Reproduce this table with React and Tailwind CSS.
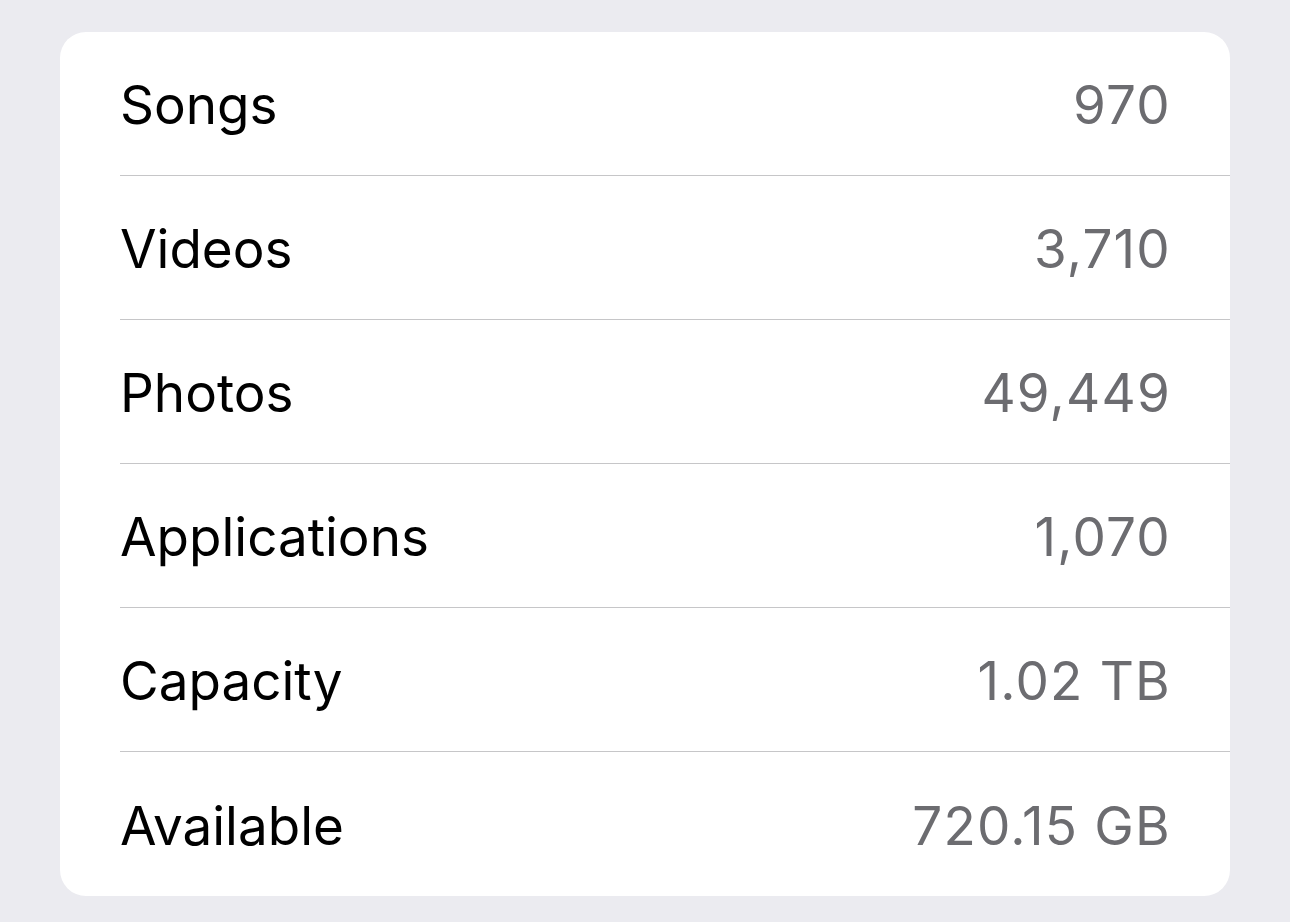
const rows = [
  { label: "Songs", value: "970" },
  { label: "Videos", value: "3,710" },
  { label: "Photos", value: "49,449" },
  { label: "Applications", value: "1,070" },
  { label: "Capacity", value: "1.02 TB" },
  { label: "Available", value: "720.15 GB" },
];

export default function App() {
  return (
    <div className="min-h-screen bg-[#ebebf0] px-[60px] pt-[32px] pb-[26px] font-['Inter','Liberation_Sans',sans-serif]">
      <div className="bg-white rounded-[26px] overflow-hidden">
        {rows.map((row, i) => (
          <div key={row.label} className="pl-[60px]">
            <div
              className={`flex items-center justify-between h-[144px] pt-[4px] pr-[59px] ${
                i < rows.length - 1 ? "border-b border-[#c6c6c8]" : ""
              }`}
            >
              <span className="text-[53px] leading-none text-black">{row.label}</span>
              <span className="text-[53px] leading-none text-[#6c6c70] tracking-[1.2px]">{row.value}</span>
            </div>
          </div>
        ))}
      </div>
    </div>
  );
}
